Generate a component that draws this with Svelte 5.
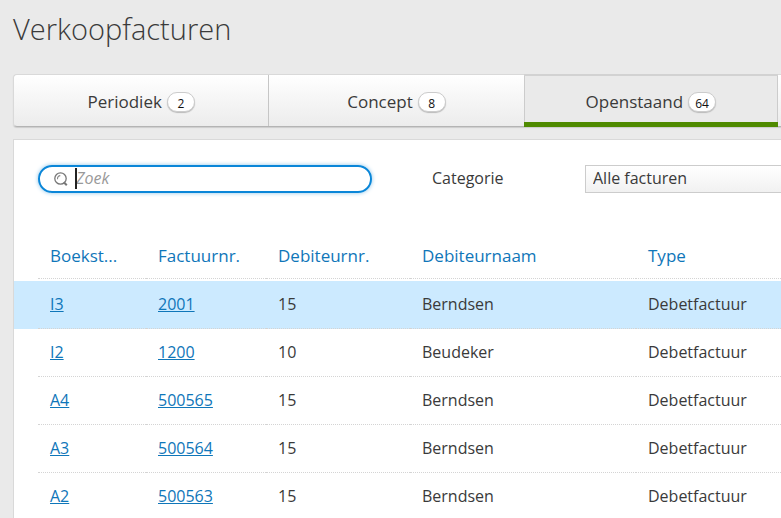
<script>
  const tabs = [
    { label: 'Periodiek', count: 2 },
    { label: 'Concept', count: 8 },
    { label: 'Openstaand', count: 64 }
  ];
  const rows = [
    { entry: 'I3', invoice: '2001', debtor: '15', name: 'Berndsen', type: 'Debetfactuur' },
    { entry: 'I2', invoice: '1200', debtor: '10', name: 'Beudeker', type: 'Debetfactuur' },
    { entry: 'A4', invoice: '500565', debtor: '15', name: 'Berndsen', type: 'Debetfactuur' },
    { entry: 'A3', invoice: '500564', debtor: '15', name: 'Berndsen', type: 'Debetfactuur' },
    { entry: 'A2', invoice: '500563', debtor: '15', name: 'Berndsen', type: 'Debetfactuur' }
  ];
  let active = $state(2);
  let selected = $state(0);
  let query = $state('');
</script>

<div class="page">
  <h1>Verkoopfacturen</h1>

  <nav class="tabs">
    {#each tabs as tab, i}
      <button type="button" class="tab" class:active={active === i} onclick={() => (active = i)}>
        <span>{tab.label}</span>
        <span class="count">{tab.count}</span>
      </button>
    {/each}
  </nav>

  <main class="panel">
    <div class="filters">
      <div class="search">
        <svg width="14" height="14" viewBox="0 0 14 14" fill="none" aria-hidden="true">
          <circle cx="6.5" cy="6.5" r="5.7" stroke="#777" stroke-width="1.3" />
          <path d="M3.5 7.2C3.3 5.2 4.6 3.7 6.3 3.6" stroke="#888" stroke-width="1.1" />
          <path d="M9.8 10.2L12.8 13.2" stroke="#777" stroke-width="2" />
        </svg>
        <input type="text" aria-label="Zoek" placeholder="Zoek" bind:value={query} />
        <span class="caret"></span>
      </div>
      <label for="category">Categorie</label>
      <select id="category">
        <option>Alle facturen</option>
      </select>
    </div>

    <table>
      <colgroup>
        <col class="c-edge" />
        <col class="c-entry" />
        <col class="c-invoice" />
        <col class="c-debtor" />
        <col class="c-name" />
        <col />
      </colgroup>
      <thead>
        <tr>
          <td class="edge"></td>
          <th>Boekst...</th>
          <th>Factuurnr.</th>
          <th>Debiteurnr.</th>
          <th>Debiteurnaam</th>
          <th>Type</th>
        </tr>
      </thead>
      <tbody>
        {#each rows as row, i}
          <tr class:selected={selected === i} onclick={() => (selected = i)}>
            <td class="edge"></td>
            <td><a href="#{row.entry}">{row.entry}</a></td>
            <td><a href="#{row.invoice}">{row.invoice}</a></td>
            <td>{row.debtor}</td>
            <td>{row.name}</td>
            <td>{row.type}</td>
          </tr>
        {/each}
      </tbody>
    </table>
  </main>
</div>

<style>
  :global(body) {
    background: #eaeaea;
  }

  .page {
    box-sizing: border-box;
    height: 100vh;
    padding: 8px 0 0 13px;
    overflow: hidden;
    display: flex;
    flex-direction: column;
    font-family: 'Open Sans', sans-serif;
    font-size: 16px;
    line-height: 24px;
    color: #3a3a3a;
  }

  h1 {
    flex: none;
    margin: 0 0 24px;
    font-size: 29px;
    line-height: 42px;
    font-weight: 300;
  }

  .tabs {
    flex: none;
    display: flex;
    height: 51px;
    margin-bottom: 12px;
    padding-right: 3px;
    border: 1px solid #d9d9d9;
    border-right: 0;
    border-bottom-color: #b4b4b4;
    border-radius: 4px 0 0 4px;
    background: linear-gradient(#fff, #ececec);
    box-shadow: 0 1px 1px #ccc;
  }

  .tab {
    flex: 1;
    display: flex;
    justify-content: center;
    align-items: center;
    gap: 5px;
    margin: 0;
    padding: 2px 0 0;
    border: 0;
    border-left: 1px solid #c6c6c6;
    background: none;
    font: inherit;
    font-size: 17px;
    color: inherit;
  }

  .tab:first-child {
    border-left: 0;
  }

  .tab.active {
    margin: -1px 0;
    padding-top: 6px;
    border-top: 2px solid #d2d2d2;
    border-bottom: 5px solid #4f8a00;
    border-left: 0;
    background: #eaeaea;
    box-shadow: inset 1px 0 #ccc, inset -1px 0 #ccc;
  }

  .count {
    box-sizing: border-box;
    width: 28px;
    height: 20px;
    border: 1px solid #ccc;
    border-radius: 10px;
    background: #fff;
    box-shadow: 0 1px 1px #bbb;
    font-size: 12px;
    line-height: 21px;
    font-weight: 500;
    color: #111;
  }

  .panel {
    flex: 1;
    min-height: 0;
    border: 1px solid #d9d9d9;
    border-width: 1px 0 0 1px;
    background: #fff;
  }

  .filters {
    display: flex;
    align-items: center;
    padding: 25px 0 0 24px;
  }

  .search {
    box-sizing: border-box;
    position: relative;
    flex: none;
    display: flex;
    align-items: center;
    gap: 8px;
    width: 334px;
    height: 28px;
    padding-left: 14px;
    border: 2px solid #0a86d8;
    border-radius: 14px;
    box-shadow: 0 0 4px #8cc4e8;
  }

  input {
    box-sizing: border-box;
    flex: 1;
    min-width: 0;
    height: 24px;
    padding: 0 0 2px;
    border: 0;
    outline: 0;
    background: none;
    font: inherit;
    color: inherit;
  }

  input::placeholder {
    color: #999;
    font-style: italic;
    opacity: 1;
  }

  .caret {
    position: absolute;
    top: 1px;
    left: 35px;
    width: 2px;
    height: 21px;
    background: #222;
  }

  label {
    flex: none;
    width: 153px;
    margin-left: 60px;
    padding-bottom: 2px;
  }

  select {
    flex: 1;
    min-width: 0;
    height: 28px;
    padding: 0 7px 2px;
    border: 1px solid #ccc;
    border-right: 0;
    border-radius: 0;
    appearance: none;
    background: linear-gradient(#fff, #f1f1f1);
    font: inherit;
    color: inherit;
  }

  table {
    width: 100%;
    margin-top: 38px;
    table-layout: fixed;
    border-collapse: separate;
    border-spacing: 0;
  }

  .c-edge {
    width: 24px;
  }

  .c-entry {
    width: 108px;
  }

  .c-invoice {
    width: 120px;
  }

  .c-debtor {
    width: 144px;
  }

  .c-name {
    width: 226px;
  }

  th,
  td {
    box-sizing: border-box;
    height: 48px;
    padding: 0 0 2px 12px;
    border-bottom: 1px dotted #d4d4d4;
    text-align: left;
    white-space: nowrap;
    font-weight: 400;
  }

  th {
    padding: 2px 0 0 12px;
    font-size: 17px;
    color: #0f76b9;
  }

  thead::after {
    content: '';
    display: table-row;
    height: 2px;
  }

  .edge {
    padding: 0;
    border-bottom: 0;
  }

  .selected {
    background: #cceaff;
  }

  a {
    color: #0f76b9;
    text-decoration: underline;
    text-underline-offset: 1px;
  }
</style>
